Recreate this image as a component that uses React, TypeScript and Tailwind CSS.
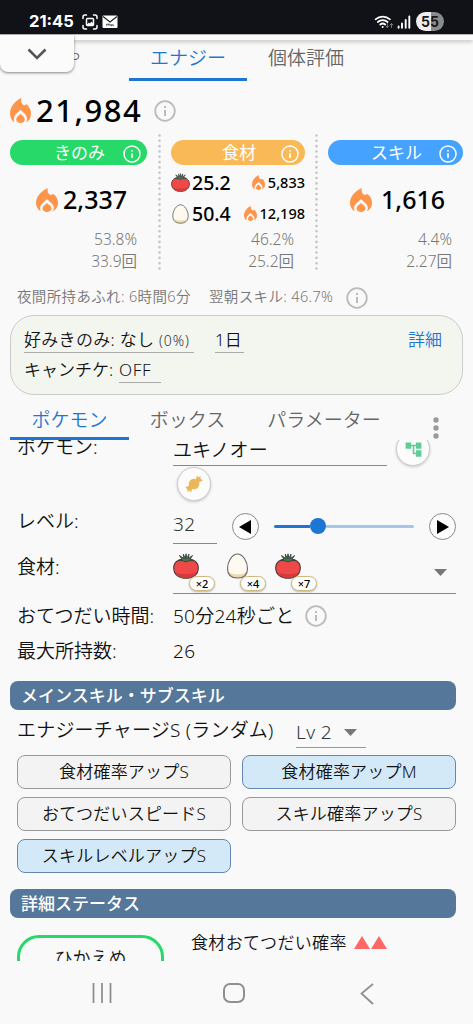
import { ReactNode } from "react";
import { MdAccountTree } from "react-icons/md";

function Flame({ className }: { className: string }) {
  return (
    <svg viewBox="0 0 64 70" preserveAspectRatio="none" className={`shrink-0 fill-[#ff944b] ${className}`}>
      <path d="M34 0C20 6 0 22 0 44c0 11 6 20 14 24-2-3-2-6-2-9 0-11 10-17 20-26 10 9 20 15 20 26 0 3-1 6-3 9 9-4 15-13 15-24 0-12-6-22-15-27-1 3-4 4-7 3C35 18 33 11 34 0z" />
      <path d="M32 44c-6 6-13 9-13 16 0 6 6 10 13 10s13-4 13-10c0-7-7-10-13-16z" />
    </svg>
  );
}

function Info({ className }: { className: string }) {
  return (
    <svg viewBox="0 0 22 22" className={`shrink-0 ${className}`} fill="none" stroke="currentColor" strokeWidth="1.8">
      <circle cx="11" cy="11" r="9.8" />
      <path d="M11 10v6M11 6v2" strokeWidth="2" />
    </svg>
  );
}

function Tomato({ className }: { className: string }) {
  return (
    <svg viewBox="0 0 26 26" className={`shrink-0 ${className}`} strokeLinejoin="round">
      <path d="M13 6.500C5 5.500.7 9.500.7 15 .7 21.500 6 25.300 13 25.300S25.300 21.500 25.300 15C25.300 9.500 21 5.500 13 6.500z" fill="#ee4848" stroke="#4b3b3b" strokeWidth="1.100" />
      <path d="M2 19c5 3 17 3 22 0-2 4-6 5.700-11 5.700S4 23 2 19z" fill="#d83a3c" />
      <path d="M12.300 5.500 10.300 1.200l.5 4.300L6.500 2.500l2.300 3.700L5 7.500l5 .3 3 1.200 3-1.200 5-.3-3.800-1.300 2.300-3.700-4 3 .5-4.300-2.200 4.300L13 .8z" fill="#3f7a4d" stroke="#3b403b" strokeWidth=".9" />
    </svg>
  );
}

function Egg({ className }: { className: string }) {
  return (
    <svg viewBox="0 0 22 26" className={`shrink-0 ${className}`}>
      <path d="M11 1C5.500 1 1 9 1 15.500S5 25 11 25s10-3 10-9.500S16.500 1 11 1z" fill="#fffaf0" />
      <path d="M1.300 18.500C5 22 16 23 20.700 18.500 19.500 22.500 16 25 11 25S2.500 22.500 1.300 18.500z" fill="#ecd9ae" />
      <path d="M11 1C5.500 1 1 9 1 15.500S5 25 11 25s10-3 10-9.500S16.500 1 11 1z" fill="none" stroke="#666" strokeWidth="1.100" />
    </svg>
  );
}

function StatusBar() {
  return (
    <header className="flex h-[34px] items-center bg-[#111218] pt-[9px] text-white">
      <span className="ml-[29px] w-[53px] font-[Inter] text-[16.500px] leading-none font-bold">21:45</span>
      <svg viewBox="0 0 16 16" className="size-4" fill="none" stroke="white" strokeWidth="1.500" strokeLinecap="round">
        <path d="M1 4.500V3a2 2 0 0 1 2-2h1.500M11.500 1H13a2 2 0 0 1 2 2v1.500M15 11.500V13a2 2 0 0 1-2 2h-1.500M4.500 15H3a2 2 0 0 1-2-2v-1.500" />
        <rect x="4.500" y="4.500" width="7" height="7" rx="1" />
        <path d="m5 10.500 2-2 1 1 1.500-2 2 2.500v1H5z" fill="white" stroke="none" />
      </svg>
      <svg viewBox="0 0 16 14" className="ml-[4px] h-[14px] w-[16px]">
        <rect x="0.500" y="0.500" width="15" height="12.500" rx="1" fill="white" />
        <path d="m1 1.500 7 5.500 7-5.500" fill="none" stroke="#222" strokeWidth="1.200" />
        <path d="M4.500 10.700v-1.500h1.700v1.500m0-1.500h1.700v1.500m1-1.500v1.500h1v-1.500m1 0v1.500h1" stroke="#333" fill="none" strokeWidth=".8" />
      </svg>
      <svg viewBox="0 0 38 16" className="ml-[256px] h-[16px] w-[38px]" fill="none" stroke="white" strokeWidth="1.700" strokeLinecap="round">
        <path d="M1.500 5.300a11 11 0 0 1 14.500 0M3.800 8a7.500 7.500 0 0 1 9.800 0M6.200 10.500a4 4 0 0 1 5 0" />
        <circle cx="8.700" cy="13" r="1" fill="white" stroke="none" />
        <path d="M13.300 9.500v4m-1.500-1.500 1.500 1.500 1.500-1.500M17.500 13.500v-4m-1.500 1.500 1.500-1.500 1.500 1.500" stroke="#777" strokeWidth="1" />
        <path d="M24.600 12.500v1.200M28 9.500v4.200M31.700 6v7.700M35.300 2.500v11.200" strokeWidth="1.900" />
      </svg>
      <span className="ml-[4px] flex h-[19px] w-7 items-center justify-center rounded-full bg-[linear-gradient(90deg,#eee_54%,#8b8b8b_54%)] font-[Inter] text-[14px] font-bold text-[#181818]">
        55
      </span>
    </header>
  );
}

function TopTabs() {
  return (
    <nav className="relative flex h-[47px] border-t border-[#bbb] text-[19px] leading-none text-[#666]">
      <div className="absolute inset-x-0 top-0 h-[5px] bg-[#fbfbfb] shadow-[0_2px_4px_#0003]" />
      <div className="absolute top-0 left-0 flex h-[37px] w-[74px] items-center justify-center rounded-b-[8px] bg-[#fbfbfb] shadow-[0_1px_3px_#0007]">
        <svg viewBox="0 0 20 12" className="h-3 w-5" fill="none" stroke="#555" strokeWidth="2.600">
          <path d="m1.500 1.500 8.500 8.500 8.500-8.500" />
        </svg>
      </div>
      <span className="w-[129px] pt-[15px] pl-[70px] text-[17px]">P</span>
      <div className="w-[118px] border-b-[3px] border-[#1c76d2] pt-[14px] text-center text-[#1c76d2]">エナジー</div>
      <span className="pt-[14px] pl-[21px]">個体評価</span>
    </nav>
  );
}

function Pill({ color, children }: { color: string; children: ReactNode }) {
  return (
    <div className={`flex h-[25px] items-center justify-end rounded-full pr-[6px] text-[17px] leading-none font-normal text-white ${color}`}>
      <span className="flex-1 pl-[26px] text-center">{children}</span>
      <Info className="mt-[3px] size-[18px]" />
    </div>
  );
}

function Rates({ rate, count, className }: { rate: string; count: string; className: string }) {
  return (
    <div className={`absolute top-[88px] text-right text-[15.500px] leading-[22px] text-[#777] ${className}`}>
      <div>{rate}</div>
      <div>{count}</div>
    </div>
  );
}

function IngredientRow({ icon, count, energy }: { icon: ReactNode; count: string; energy: string }) {
  return (
    <div className="flex h-[31px] items-center text-black">
      {icon}
      <span className="ml-[2px] text-[19.500px] font-medium">{count}</span>
      <span className="ml-auto flex items-center gap-[3px] text-[14.500px] font-medium">
        <Flame className="h-[15px] w-[13px]" />
        {energy}
      </span>
    </div>
  );
}

function Dots() {
  return (
    <svg className="mt-[-6px] h-[139px] w-[3px] shrink-0" viewBox="0 0 3 139">
      <path d="M1.500 1.500V139" stroke="#c4c4c4" strokeWidth="2.600" strokeLinecap="round" strokeDasharray="0 5.320" />
    </svg>
  );
}

function Summary() {
  return (
    <section>
      <div className="flex h-[59px] items-center pl-[10px]">
        <Flame className="h-[25px] w-[21px]" />
        <span className="ml-[5px] w-[118px] text-[31px] leading-none font-medium tracking-[1.500px] text-black">21,984</span>
        <Info className="size-[22px] text-[#bbb]" />
      </div>
      <div className="flex h-[147px] pl-[10px]">
        <div className="relative w-[137px]">
          <Pill color="bg-[#26d968]">きのみ</Pill>
          <div className="flex h-[70px] items-center pl-[26px]">
            <Flame className="h-[24px] w-[22px]" />
            <span className="ml-[5px] text-[25px] font-medium text-black">2,337</span>
          </div>
          <Rates rate="53.8%" count="33.9回" className="right-[10px]" />
        </div>
        <div className="flex w-6 justify-center"><Dots /></div>
        <div className="relative w-[134px]">
          <Pill color="bg-[#f9b956]">食材</Pill>
          <div className="pt-[2px]">
            <IngredientRow icon={<Tomato className="size-[19px]" />} count="25.2" energy="5,833" />
            <IngredientRow icon={<Egg className="mx-px h-[20px] w-[17px]" />} count="50.4" energy="12,198" />
          </div>
          <Rates rate="46.2%" count="25.2回" className="right-[11px]" />
        </div>
        <div className="flex w-[23px] justify-center"><Dots /></div>
        <div className="relative w-[135px]">
          <Pill color="bg-[#45a2fe]">スキル</Pill>
          <div className="flex h-[70px] items-center pl-[22px]">
            <Flame className="h-[24px] w-[22px]" />
            <span className="ml-[9px] text-[25px] font-medium text-black">1,616</span>
          </div>
          <Rates rate="4.4%" count="2.27回" className="right-[11px]" />
        </div>
      </div>
      <div className="flex h-[28px] items-center pb-[8px] pl-[17px] text-[14.500px] tracking-[0.350px] text-[#777]">
        <span className="w-[192px]">夜間所持あふれ: 6時間6分</span>
        <span className="w-[137px]">翌朝スキル: 46.7%</span>
        <Info className="mt-[2px] size-[22px] text-[#bbb]" />
      </div>
    </section>
  );
}

function Conditions() {
  return (
    <section className="mx-[10px] h-[80px] w-[453px] rounded-[24px] border-[1.500px] border-[#ccc] bg-[#f3f5ef] pt-[13px] pr-[20px] pl-[13px] text-[17px] leading-[22px] text-[#111]">
      <div className="flex h-[30px] items-start">
        <span className="h-[24px] w-[170px] border-b border-[#aaa] whitespace-nowrap tracking-[0.300px]">
          好みきのみ: なし <small className="text-[14px] tracking-[0.900px] text-[#333]">(0%)</small>
        </span>
        <span className="ml-[21px] h-[24px] w-[29px] border-b border-[#aaa]">1日</span>
        <span className="ml-auto text-[#1c76d2]">詳細</span>
      </div>
      <div className="flex">
        <span className="w-[95px]">キャンチケ:</span>
        <span className="h-[24px] w-[42px] border-b border-[#aaa] tracking-[0.700px]">OFF</span>
      </div>
    </section>
  );
}

function PanelTabs() {
  return (
    <nav className="flex h-[45px] pl-[10px] text-[19px] leading-none text-[#666]">
      <span className="w-[119px] border-b-[3px] border-[#1c76d2] pt-[16px] text-center text-[#1c76d2]">ポケモン</span>
      <span className="w-[117px] pt-[16px] text-center">ボックス</span>
      <span className="w-[156px] pt-[16px] text-center">パラメーター</span>
      <svg viewBox="0 0 6 22" className="mt-[22px] ml-[31px] h-[22px] w-[6px] fill-[#999]">
        <circle cx="3" cy="3" r="2.700" />
        <circle cx="3" cy="11" r="2.700" />
        <circle cx="3" cy="19" r="2.700" />
      </svg>
    </nav>
  );
}

function RoundButton({ className, children }: { className: string; children: ReactNode }) {
  return <button className={`flex shrink-0 items-center justify-center rounded-full bg-[#fcfcfc] ${className}`}>{children}</button>;
}

function StackedIcon({ icon, count }: { icon: ReactNode; count: string }) {
  return (
    <div className="relative w-[51px]">
      {icon}
      <span className="absolute top-[23px] left-[16px] flex h-[15px] w-[26px] items-center justify-center rounded-full border border-[#cdb97c] bg-white text-[11px] font-medium text-black shadow-[0_1px_2px_#0004]">
        {count}
      </span>
    </div>
  );
}

function SectionTitle({ children }: { children: ReactNode }) {
  return (
    <h2 className="ml-[10px] flex h-[29px] w-[446px] items-center rounded-[8px] bg-[#557799] pb-px pl-[11px] text-[17px] leading-none font-medium text-white">
      {children}
    </h2>
  );
}

const subSkills = [
  { name: "食材確率アップS", active: false },
  { name: "食材確率アップM", active: true },
  { name: "おてつだいスピードS", active: false },
  { name: "スキル確率アップS", active: false },
  { name: "スキルレベルアップS", active: true },
];

function PokemonForm() {
  return (
    <main className="h-[521px] overflow-hidden text-[19px] leading-[26px] text-[#111]">
      <div className="-mt-[8px] flex h-[34px] pl-[17px]">
        <span className="w-[156px] pt-[2px]">ポケモン:</span>
        <span className="w-[214px] border-b border-[#888] pt-[5px] tracking-[0.300px]">ユキノオー</span>
        <RoundButton className="ml-[9px] size-[34px] border border-[#ccc] shadow-[0_1px_3px_#0003]">
          <MdAccountTree className="size-[19px] text-[#62cc96]" />
        </RoundButton>
      </div>
      <div className="flex h-[41px] pt-px pl-[177px]">
        <RoundButton className="size-[34px] border border-[#ccc] shadow-[0_1px_3px_#0003]">
          <svg viewBox="0 0 18 18" className="size-[18px] fill-[#e9b75c]">
            <circle cx="9" cy="9" r="5.300" />
            <path d="M10.500 6.500 11.800.5l1.900 2L15.500.8v3l2.300 1.800L11.500 8.500zM7.500 11.500l-1.300 6-1.900-2-1.800 1.700v-3L.2 12.400 6.500 9.500z" />
          </svg>
        </RoundButton>
      </div>
      <div className="flex h-[41px] items-start pl-[17px]">
        <span className="w-[156px] pt-px">レベル:</span>
        <span className="h-[37px] w-[44px] border-b border-[#888] pt-[4px] tracking-[0.300px] text-[#333]">32</span>
        <RoundButton className="mt-[6px] ml-[15px] size-[27px] border border-[#888]">
          <svg viewBox="0 0 12 14" className="mr-[2px] h-[14px] w-3"><path d="M12 0v14L0 7z" /></svg>
        </RoundButton>
        <div className="mt-[11px] ml-[15px] flex h-4 w-[140px] items-center">
          <div className="h-[3px] w-[36px] rounded-l bg-[#1c76d2]" />
          <div className="size-4 rounded-full bg-[#1c76d2]" />
          <div className="h-[3px] flex-1 rounded-r bg-[#a3c7ea]" />
        </div>
        <RoundButton className="mt-[6px] ml-[15px] size-[27px] border border-[#888]">
          <svg viewBox="0 0 12 14" className="h-[14px] w-3"><path d="M0 0v14l12-7z" /></svg>
        </RoundButton>
      </div>
      <div className="flex h-[46px] pl-[17px]">
        <span className="w-[156px] pt-[6px]">食材:</span>
        <div className="flex w-[283px] border-b border-[#888] pt-[5px]">
          <StackedIcon icon={<Tomato className="size-[26px]" />} count="×2" />
          <StackedIcon icon={<Egg className="ml-[2px] h-[26px] w-[23px]" />} count="×4" />
          <StackedIcon icon={<Tomato className="size-[26px]" />} count="×7" />
          <svg viewBox="0 0 13 7" className="mt-[16px] mr-[9px] ml-auto h-[7px] w-[13px] fill-[#777]"><path d="M0 0h13L6.500 7z" /></svg>
        </div>
      </div>
      <div className="flex h-[44px] items-center pl-[17px]">
        <span className="w-[156px]">おてつだい時間:</span>
        <span className="w-[132px] tracking-[0.250px] whitespace-nowrap">50分24秒ごと</span>
        <Info className="size-[22px] text-[#bbb]" />
      </div>
      <div className="flex h-[43px] pl-[17px]">
        <span className="w-[156px]">最大所持数:</span>
        <span className="tracking-[0.300px]">26</span>
      </div>
      <SectionTitle>メインスキル・サブスキル</SectionTitle>
      <div className="flex h-[45px] pl-[17px]">
        <span className="w-[279px] pt-[7px] tracking-[0.200px] whitespace-nowrap">エナジーチャージS (ランダム)</span>
        <span className="flex h-[38px] w-[70px] items-center border-b border-[#999] pt-[7px] tracking-[0.400px] text-[#333]">
          Lv 2
          <svg viewBox="0 0 13 7" className="ml-auto mr-[9px] h-[7px] w-[13px] fill-[#777]"><path d="M0 0h13L6.500 7z" /></svg>
        </span>
      </div>
      <div className="ml-[17px] grid h-[134px] w-[439px] auto-rows-[34px] grid-cols-2 gap-x-[11px] gap-y-[8px]">
        {subSkills.map((skill) => (
          <button
            key={skill.name}
            className={`rounded-[8px] border pb-[2px] text-[17px] leading-none tracking-[0.200px] ${
              skill.active ? "border-[#6486b0] bg-[#d4e9f7]" : "border-[#999] bg-[#f3f3f3]"
            }`}
          >
            {skill.name}
          </button>
        ))}
      </div>
      <SectionTitle>詳細ステータス</SectionTitle>
      <div className="flex h-[60px] pt-[17px] pl-[17px]">
        <div className="h-[60px] w-[147px] rounded-[22px] border-[3px] border-[#26d968] pt-[7px] text-center text-[18px]">ひかえめ</div>
        <span className="ml-[27px] text-[17px] leading-[16px] tracking-[0.350px]">食材おてつだい確率</span>
        <svg viewBox="0 0 33 13" className="mt-[1px] ml-[7px] h-[13px] w-[33px] fill-[#ff6666]">
          <path d="M8 0l8 13H0zM25 0l8 13H17z" />
        </svg>
      </div>
    </main>
  );
}

function NavBar() {
  return (
    <footer className="flex h-[63px] items-start pt-[22px] pl-[92px]">
      <svg viewBox="0 0 20 20" className="h-5 w-5" stroke="#909090" strokeWidth="1.800"><path d="M1.500 0v20M10 0v20M18.500 0v20" /></svg>
      <svg viewBox="0 0 22 20" className="ml-[111px] h-5 w-[22px]" fill="none" stroke="#909090" strokeWidth="2"><rect x="1" y="1" width="20" height="18" rx="6" /></svg>
      <svg viewBox="0 0 14 22" className="ml-[115px] h-[22px] w-[14px]" fill="none" stroke="#909090" strokeWidth="1.800"><path d="M13 1 1.500 10.500 13 21" /></svg>
    </footer>
  );
}

export default function App() {
  return (
    <div className="h-[1024px] w-[473px] overflow-hidden bg-[#f9f9f9] font-['Noto_Sans','Noto_Sans_CJK_JP',sans-serif] font-[350]">
      <StatusBar />
      <TopTabs />
      <Summary />
      <Conditions />
      <PanelTabs />
      <PokemonForm />
      <NavBar />
    </div>
  );
}
